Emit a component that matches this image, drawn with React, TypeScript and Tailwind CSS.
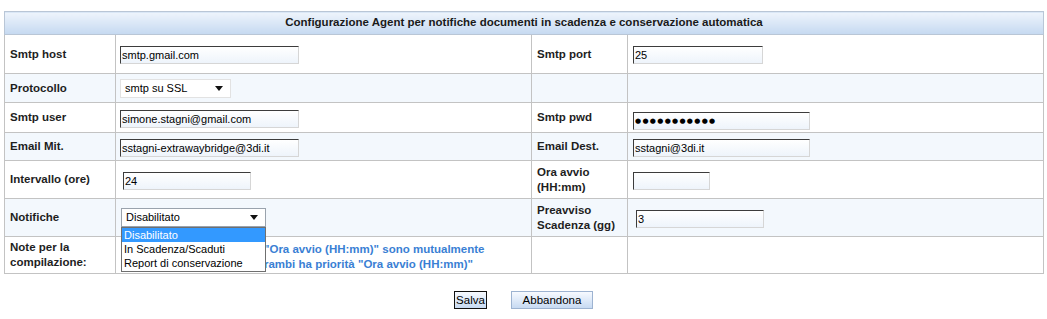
import React from "react";

const font = { fontFamily: '"Liberation Sans", Arial, sans-serif' };

function TextBox({ value, w, dots }: { value: string; w: string; dots?: boolean }) {
  return (
    <input
      readOnly
      type="text"
      value={value}
      className={`${w} h-[18px] px-[1px] ${dots ? "text-[7px] tracking-[1.3px]" : "text-[11px]"} text-black border border-t-[#3c3c3c] border-l-[#3c3c3c] border-b-[#d6d6d6] border-r-[#d6d6d6] bg-gradient-to-b from-white to-[#eef4fb] outline-none`}
      style={dots ? { fontFamily: '"DejaVu Sans", sans-serif' } : font}
    />
  );
}

function FakeSelect({ value, w, dark }: { value: string; w: string; dark?: boolean }) {
  return (
    <div
      className={`${w} h-[19px] flex items-center justify-between pl-[4px] pr-[7px] text-[11px] text-black bg-white border ${
        dark ? "border-[#9aa3ad]" : "border-[#e2e2e2]"
      }`}
    >
      <span>{value}</span>
      <svg width="8" height="5" viewBox="0 0 8 5">
        <path d="M0 0h8L4 5z" fill="#111" />
      </svg>
    </div>
  );
}

const lbl = "border border-[#c3c3c3] pl-[5px] pr-2 text-[11.5px] font-bold text-[#1e1e1e] leading-[15px]";
const cell = "border border-[#c3c3c3] pl-[4px]";

export default function App() {
  return (
    <div className="w-[1047px] h-[319px] bg-white pt-[11px] pl-[4px]" style={font}>
      <table className="border-collapse w-[1039px] table-fixed">
        <colgroup>
          <col className="w-[111px]" />
          <col className="w-[416px]" />
          <col className="w-[96px]" />
          <col className="w-[416px]" />
        </colgroup>
        <tbody>
          <tr className="h-[23px]">
            <td
              colSpan={4}
              className="border border-[#b9c6d6] bg-gradient-to-b from-[#eef4fc] to-[#c5d9f1] text-center text-[11.5px] font-bold text-[#1a1a1a]"
            >
              Configurazione Agent per notifiche documenti in scadenza e conservazione automatica
            </td>
          </tr>
          <tr className="h-[39px] bg-white">
            <td className={lbl}>Smtp host</td>
            <td className={cell}>
              <TextBox value="smtp.gmail.com" w="w-[179px]" />
            </td>
            <td className={lbl}>Smtp port</td>
            <td className={`${cell} pl-[5px]`}>
              <TextBox value="25" w="w-[130px]" />
            </td>
          </tr>
          <tr className="h-[29px] bg-[#f3f8fd]">
            <td className={lbl}>Protocollo</td>
            <td className={cell}>
              <FakeSelect value="smtp su SSL" w="w-[111px]" />
            </td>
            <td className={lbl}></td>
            <td className={cell}></td>
          </tr>
          <tr className="h-[30px] bg-white">
            <td className={lbl}>Smtp user</td>
            <td className={cell}>
              <TextBox value="simone.stagni@gmail.com" w="w-[179px]" />
            </td>
            <td className={lbl}>Smtp pwd</td>
            <td className={`${cell} pl-[5px]`}>
              <TextBox value="●●●●●●●●●●●" dots w="w-[177px]" />
            </td>
          </tr>
          <tr className="h-[28px] bg-[#f3f8fd]">
            <td className={lbl}>Email Mit.</td>
            <td className={cell}>
              <TextBox value="sstagni-extrawaybridge@3di.it" w="w-[179px]" />
            </td>
            <td className={lbl}>Email Dest.</td>
            <td className={`${cell} pl-[5px]`}>
              <TextBox value="sstagni@3di.it" w="w-[177px]" />
            </td>
          </tr>
          <tr className="h-[38px] bg-white">
            <td className={lbl}>Intervallo (ore)</td>
            <td className={`${cell} pl-[7px]`}>
              <TextBox value="24" w="w-[128px]" />
            </td>
            <td className={lbl}>
              Ora avvio
              <br />
              (HH:mm)
            </td>
            <td className={`${cell} pl-[5px]`}>
              <TextBox value="" w="w-[77px]" />
            </td>
          </tr>
          <tr className="h-[38px] bg-[#f3f8fd]">
            <td className={lbl}>Notifiche</td>
            <td className={`${cell} pl-[5px]`}>
              <div className="relative w-[145px]">
                <FakeSelect value="Disabilitato" w="w-[145px]" dark />
                <div className="absolute left-0 top-full z-10 w-[145px] bg-white border border-[#6f6f6f] text-[11px] leading-[14px] text-black">
                  <div className="bg-[#3399ff] text-white pl-[2px]">Disabilitato</div>
                  <div className="pl-[2px]">In Scadenza/Scaduti</div>
                  <div className="pl-[2px] pb-[1px]">Report di conservazione</div>
                </div>
              </div>
            </td>
            <td className={lbl}>
              Preavviso
              <br />
              Scadenza (gg)
            </td>
            <td className={`${cell} pl-[8px]`}>
              <TextBox value="3" w="w-[128px]" />
            </td>
          </tr>
          <tr className="h-[37px] bg-white">
            <td className={lbl}>
              Note per la
              <br />
              compilazione:
            </td>
            <td className={`${cell} pl-[148px] pt-[3px] text-[11.5px] font-bold text-[#3a7fd4] leading-[15px]`}>
              "Ora avvio (HH:mm)" sono mutualmente
              <br />
              rambi ha priorità "Ora avvio (HH:mm)"
            </td>
            <td className={lbl}></td>
            <td className={cell}></td>
          </tr>
        </tbody>
      </table>
      <div className="flex justify-center gap-[24px] mt-[17px] pr-[4px]">
        <button className="h-[18px] w-[33px] text-[11.5px] text-black border border-[#111] bg-gradient-to-b from-[#f7faff] to-[#c7daf2]">
          Salva
        </button>
        <button className="h-[18px] w-[82px] text-[11.5px] text-black border border-[#9db3d1] bg-gradient-to-b from-[#f7faff] to-[#c7daf2]">
          Abbandona
        </button>
      </div>
    </div>
  );
}
